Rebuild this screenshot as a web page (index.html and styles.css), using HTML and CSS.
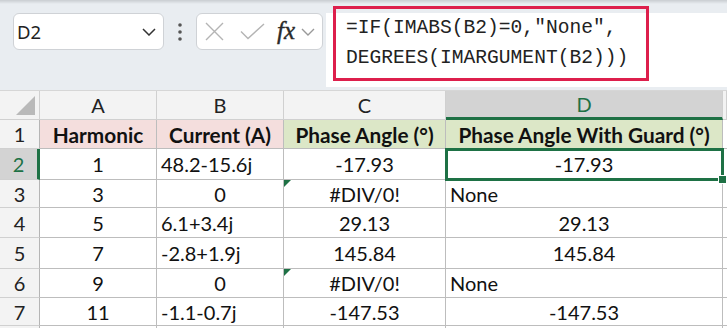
FILE: index.html
```html
<!DOCTYPE html>
<html lang="en">
<head>
    <meta charset="UTF-8">
    <title>Phase Angle With Guard</title>
    <link rel="stylesheet" href="styles.css">
</head>
<body>
    <div class="toolbar">
        <div class="name-box">
            <span>D2</span>
            <svg class="chevron" width="14" height="8" viewBox="0 0 14 8"><polyline points="1,1 7,7 13,1" fill="none" stroke="#333" stroke-width="1.5"/></svg>
        </div>
        <div class="grip">
            <svg width="6" height="18" viewBox="0 0 6 18"><circle cx="3" cy="2" r="1.8" fill="#555"/><circle cx="3" cy="9" r="1.8" fill="#555"/><circle cx="3" cy="16" r="1.8" fill="#555"/></svg>
        </div>
        <div class="fx-box">
            <svg width="19" height="19" viewBox="0 0 19 19"><path d="M1 1 L18 18 M18 1 L1 18" stroke="#b4b4b4" stroke-width="1.4" fill="none"/></svg>
            <svg width="25" height="17" viewBox="0 0 25 17"><polyline points="1,8.5 8,15.5 24,1" fill="none" stroke="#b4b4b4" stroke-width="1.4"/></svg>
            <span class="fx">fx</span>
            <svg width="14" height="8" viewBox="0 0 14 8"><polyline points="1,1 7,7 13,1" fill="none" stroke="#999" stroke-width="1.4"/></svg>
        </div>
        <div class="formula-bar">
            <div class="formula-highlight">=IF(IMABS(B2)=0,"None",<br>DEGREES(IMARGUMENT(B2)))</div>
        </div>
    </div>

    <div class="sheet">
        <div class="hdr corner">
            <svg width="19" height="19" viewBox="0 0 19 19"><polygon points="19,0 19,19 0,19" fill="#b9b9b9"/></svg>
        </div>
        <div class="hdr col">A</div>
        <div class="hdr col">B</div>
        <div class="hdr col">C</div>
        <div class="hdr col active">D</div>
        <div class="hdr col"></div>

        <div class="hdr row">1</div>
        <div class="cell c bold pink">Harmonic</div>
        <div class="cell c bold pink">Current (A)</div>
        <div class="cell c bold green">Phase Angle (°)</div>
        <div class="cell c bold green">Phase Angle With Guard (°)</div>
        <div class="cell"></div>

        <div class="hdr row active">2</div>
        <div class="cell c">1</div>
        <div class="cell l">48.2-15.6j</div>
        <div class="cell c">-17.93</div>
        <div class="cell c selected">-17.93<span class="handle"></span></div>
        <div class="cell"></div>

        <div class="hdr row">3</div>
        <div class="cell c">3</div>
        <div class="cell c">0</div>
        <div class="cell c err">#DIV/0!</div>
        <div class="cell l">None</div>
        <div class="cell"></div>

        <div class="hdr row">4</div>
        <div class="cell c">5</div>
        <div class="cell l">6.1+3.4j</div>
        <div class="cell c">29.13</div>
        <div class="cell c">29.13</div>
        <div class="cell"></div>

        <div class="hdr row">5</div>
        <div class="cell c">7</div>
        <div class="cell l">-2.8+1.9j</div>
        <div class="cell c">145.84</div>
        <div class="cell c">145.84</div>
        <div class="cell"></div>

        <div class="hdr row">6</div>
        <div class="cell c">9</div>
        <div class="cell c">0</div>
        <div class="cell c err">#DIV/0!</div>
        <div class="cell l">None</div>
        <div class="cell"></div>

        <div class="hdr row">7</div>
        <div class="cell c">11</div>
        <div class="cell l">-1.1-0.7j</div>
        <div class="cell c">-147.53</div>
        <div class="cell c">-147.53</div>
        <div class="cell"></div>

        <div class="hdr row"></div>
        <div class="cell"></div>
        <div class="cell"></div>
        <div class="cell"></div>
        <div class="cell"></div>
        <div class="cell"></div>
    </div>
</body>
</html>
```

FILE: styles.css
```css
* {
    margin: 0;
    padding: 0;
    box-sizing: border-box;
}

body {
    width: 727px;
    height: 328px;
    overflow: hidden;
    background: #ffffff;
    font-family: Lato, "Liberation Sans", sans-serif;
    color: #111;
}

/* formula bar area */
.toolbar {
    height: 90px;
    display: flex;
    align-items: flex-start;
    padding-top: 13px;
    background: linear-gradient(#c9cdd1 0, #e9edf1 4px);
}

.name-box {
    margin-left: 13px;
    width: 151px;
    height: 37px;
    background: #fff;
    border: 1px solid #cfd2d6;
    border-radius: 6px;
    display: flex;
    align-items: center;
    justify-content: space-between;
    padding: 0 7px 0 3px;
    font-family: "Noto Sans", sans-serif;
    font-size: 18.5px;
    color: #222;
}

.grip {
    width: 32px;
    height: 37px;
    display: flex;
    align-items: center;
    justify-content: center;
}

.fx-box {
    width: 127px;
    height: 37px;
    background: #fff;
    border: 1px solid #cfd2d6;
    border-radius: 6px;
    display: flex;
    align-items: center;
    padding-left: 8px;
}

.fx-box svg:nth-child(1) { margin-right: 16px; }
.fx-box svg:nth-child(2) { margin-right: 12px; }

.fx {
    font-family: "Liberation Serif", serif;
    font-style: italic;
    font-size: 25px;
    color: #2a2a2a;
    margin-right: 6px;
    line-height: 1;
    padding-bottom: 2px;
    -webkit-text-stroke: 0.4px #2a2a2a;
}

.formula-bar {
    flex: 1;
    margin-left: 3px;
    height: 74px;
    background: #fff;
}

.formula-highlight {
    margin: -7px 0 0 7px;
    width: 316px;
    height: 75px;
    border: 3px solid #dd1f4c;
    padding: 4px 0 0 10px;
    font-family: "Liberation Mono", monospace;
    font-size: 19.6px;
    line-height: 30px;
    color: #222;
}

/* spreadsheet grid */
.sheet {
    display: grid;
    grid-template-columns: 40px 117px 127px 162px 277px 4px;
    grid-template-rows: 29px 29px 31px 28px 30px 31px 29px 28px 3px;
    border-top: 1px solid #d6d6d6;
    font-size: 20px;
}

.hdr {
    background: #f3f3f3;
    border-right: 1px solid #d0d0d0;
    border-bottom: 1px solid #d0d0d0;
    display: flex;
    align-items: center;
    justify-content: center;
    color: #222;
    font-size: 20px;
}

.hdr.corner {
    justify-content: flex-end;
    align-items: flex-end;
    padding: 0 4px 4px 0;
}

.hdr.row {
    border-right-color: #b5b5b5;
}

.hdr.col.active {
    background: #d3d3d3;
    color: #1e7145;
    border-bottom: 3px solid #1e7145;
}

.hdr.row.active {
    background: #d3d3d3;
    color: #1e7145;
    border-right: 3px solid #1e7145;
}

.cell {
    position: relative;
    border-right: 1px solid #bdbdbd;
    border-bottom: 1px solid #bdbdbd;
    display: flex;
    align-items: center;
    white-space: nowrap;
    padding: 0 4px;
}

.cell.c { justify-content: center; }
.cell.l { justify-content: flex-start; }
.cell.bold { font-weight: bold; font-size: 20.8px; }
.cell.pink { background: #f4dedd; }
.cell.green { background: #dce7c7; }

.cell.err::before {
    content: "";
    position: absolute;
    left: 0;
    top: 0;
    border-top: 7px solid #1e7145;
    border-right: 7px solid transparent;
}

.cell.selected {
    outline: 3px solid #1e7145;
    outline-offset: -2px;
    z-index: 1;
}

.handle {
    position: absolute;
    right: -5px;
    bottom: -5px;
    width: 9px;
    height: 9px;
    background: #1e7145;
    border: 1px solid #fff;
}
```
